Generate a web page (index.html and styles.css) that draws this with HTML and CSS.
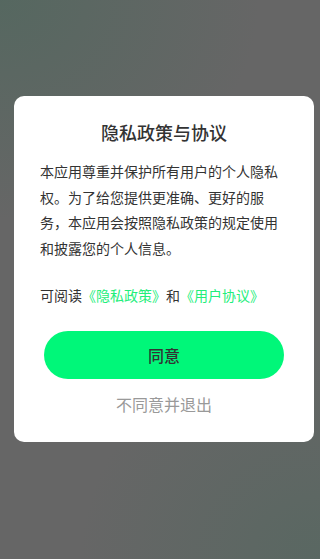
FILE: index.html
```html
<!DOCTYPE html>
<html lang="zh-CN">
<head>
<meta charset="utf-8">
<meta name="viewport" content="width=device-width, initial-scale=1">
<title>隐私政策与协议</title>
<link rel="stylesheet" href="styles.css">
</head>
<body>
<div class="screen">
  <div class="dialog">
    <h1 class="title">隐私政策与协议</h1>
    <p class="body">本应用尊重并保护所有用户的个人隐私权。为了给您提供更准确、更好的服务，本应用会按照隐私政策的规定使用和披露您的个人信息。</p>
    <p class="links">可阅读<a class="link" href="#">《隐私政策》</a>和<a class="link" href="#">《用户协议》</a></p>
    <button class="agree" type="button">同意</button>
    <button class="decline" type="button">不同意并退出</button>
  </div>
</div>
</body>
</html>
```
FILE: styles.css
```css
* { box-sizing: border-box; }
html, body {
  margin: 0;
  padding: 0;
}
body {
  font-family: "Noto Sans CJK SC", "Noto Sans", sans-serif;
}
.screen {
  width: 320px;
  height: 559px;
  padding-top: 96px;
  background:
    radial-gradient(ellipse 260px 220px at 0 0, rgba(80, 104, 94, 0.75), rgba(80, 104, 94, 0) 100%),
    radial-gradient(ellipse 240px 220px at 100% 100%, rgba(84, 104, 96, 0.7), rgba(84, 104, 96, 0) 100%),
    #666666;
  overflow: hidden;
}
.dialog {
  margin-left: 14px;
  width: 300px;
  background: #ffffff;
  border-radius: 10px;
  padding: 24px 26px 26px;
  display: flex;
  flex-direction: column;
}
.title {
  margin: 0;
  font-size: 18px;
  line-height: 24px;
  font-weight: 500;
  color: #333333;
  text-align: center;
}
.body {
  margin: 15px 0 0;
  font-size: 14px;
  line-height: 25.5px;
  color: #333333;
}
.links {
  margin: 22px 0 0;
  font-size: 14px;
  line-height: 25.5px;
  color: #333333;
}
.link {
  color: #22ee7a;
  text-decoration: none;
}
.agree {
  margin: 22px auto 0;
  width: 240px;
  height: 48px;
  border: none;
  border-radius: 24px;
  background: #00f779;
  color: #333333;
  font-family: inherit;
  font-size: 16px;
  font-weight: 500;
  padding: 0;
}
.decline {
  margin: 13px auto 0;
  border: none;
  background: transparent;
  color: #999999;
  font-family: inherit;
  font-size: 16px;
  line-height: 24px;
  padding: 0;
}
```
